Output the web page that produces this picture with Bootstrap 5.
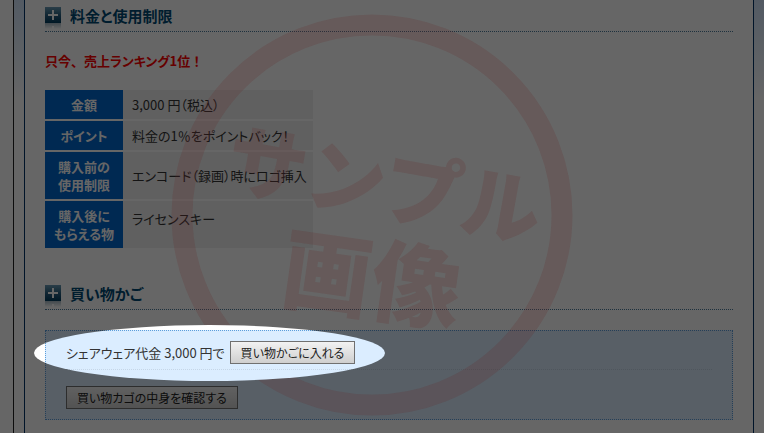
<!DOCTYPE html>
<html lang="ja">
<head>
<meta charset="utf-8">
<meta name="viewport" content="width=device-width, initial-scale=1">
<title>料金と使用制限</title>
<link href="https://cdn.jsdelivr.net/npm/bootstrap@5.3.0/dist/css/bootstrap.min.css" rel="stylesheet">
<style>
body{font-family:"Noto Sans CJK JP",sans-serif;font-size:13px;line-height:18px;color:#333;background:#fff;font-feature-settings:"palt"}
.page-frame{margin-left:13px;border-left:1px solid #222;background:linear-gradient(#cfe2f8,#fff 100px)}
.page-main{margin:0 10px;background:#fff;border:solid #003366;border-width:0 1px;padding:6px 20px 13px;min-height:100vh}
.sec-title{font-size:15px;line-height:20px;font-weight:700;color:#004a73;gap:9px;height:26px;border-bottom:1px dotted #4d7a9c}
.sec-title svg{flex:none;margin-top:1px}
.rank-note{font-weight:700;color:#f00;margin:20px 0}
.full-width{font-feature-settings:normal}
.spec-table{border-collapse:separate;border-spacing:0;margin-bottom:34px}
.spec-table th,.spec-table td{border-bottom:2px solid #fff;vertical-align:middle}
.spec-table th{background:#0066cc;color:#fff;text-align:center;width:78px;padding:6px 0 5px}
.spec-table td{background:#efefef;width:190px;padding:5px 4px 5px 9px}
.spec-table .key-cell{padding-bottom:17px}
.cart-box{background:#dbedff;border:1px dotted #5c9edb;padding:10px 20px;margin-top:20px}
.cart-line{gap:5px;padding-bottom:5px;border-bottom:1px dotted #c5d6e8;margin-bottom:16px}
.cart-btn{font-size:12px;line-height:17px;padding:2px 10px;border:1px solid #707070;border-radius:0;background:linear-gradient(#f2f2f2,#cfcfcf);color:#222;font-feature-settings:inherit}
.shade{left:0;top:0;pointer-events:none}
.stamp-text{font-weight:900;font-feature-settings:normal}
</style>
<script src="https://cdn.jsdelivr.net/npm/bootstrap@5.3.0/dist/js/bootstrap.bundle.min.js"></script>
</head>
<body class="overflow-hidden">
<svg width="0" height="0" class="position-absolute" aria-hidden="true">
<defs>
<linearGradient id="tile" x2="0" y2="1"><stop offset="0" stop-color="#6a9bb5"/><stop offset=".5" stop-color="#2b6080"/><stop offset="1" stop-color="#003a5c"/></linearGradient>
<linearGradient id="glow" x2="0" y2="1"><stop offset="0" stop-color="#a6b8c2"/><stop offset="1" stop-color="#fff"/></linearGradient>
<symbol id="plus" viewBox="0 0 16 22"><path fill="url(#tile)" d="M0 0h16v16H0z"/><path fill="url(#glow)" d="M0 16h16v6H0z"/><path fill="#fff" d="M7 3h2v4h4v2H9v4H7V9H3V7h4zM7 19h2v3H7z"/></symbol>
</defs>
</svg>
<div class="page-frame">
<main class="page-main">
<h2 class="sec-title d-flex mb-0"><svg width="16" height="22" aria-hidden="true"><use href="#plus"/></svg>料金と使用制限</h2>
<p class="rank-note">只今<span class="full-width">、</span>売上ランキング1位<span class="full-width">！</span></p>
<table class="spec-table">
<tbody>
<tr><th scope="row">金額</th><td>3,000 円（税込）</td></tr>
<tr><th scope="row">ポイント</th><td>料金の1％をポイントバック！</td></tr>
<tr><th scope="row">購入前の<br>使用制限</th><td>エンコード（録画）時にロゴ挿入</td></tr>
<tr><th scope="row">購入後に<br>もらえる物</th><td class="key-cell">ライセンスキー</td></tr>
</tbody>
</table>
<h2 class="sec-title d-flex mb-0"><svg width="16" height="22" aria-hidden="true"><use href="#plus"/></svg>買い物かご</h2>
<div class="cart-box">
<div class="cart-line d-flex align-items-center"><span>シェアウェア代金 3,000 円で</span><button type="button" class="btn cart-btn">買い物かごに入れる</button></div>
<button type="button" class="btn cart-btn">買い物カゴの中身を確認する</button>
</div>
</main>
</div>
<svg class="shade position-absolute w-100 h-100">
<defs><mask id="spot"><rect width="100%" height="100%" fill="#fff"/><ellipse cx="209.5" cy="353" rx="175.5" ry="28" fill="#000"/></mask></defs>
<g mask="url(#spot)">
<rect width="100%" height="100%" fill="#000" fill-opacity=".6"/>
<circle cx="372" cy="215" r="190" fill="none" stroke="#66282a" stroke-opacity=".2" stroke-width="21"/>
<g class="stamp-text" fill="#66282a" fill-opacity=".2">
<text transform="translate(223 187) rotate(10)" font-size="80">サンプル</text>
<text transform="translate(278 300) rotate(8)" font-size="90">画像</text>
</g>
</g>
</svg>
</body>
</html>
